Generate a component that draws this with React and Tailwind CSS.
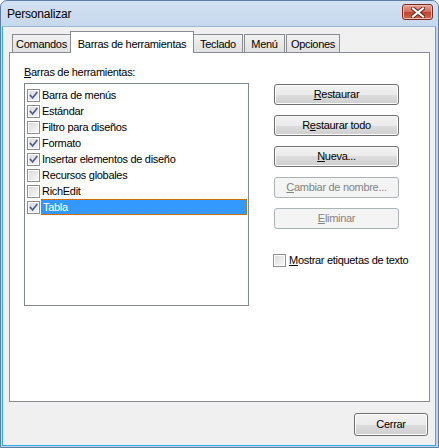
import React from 'react'

const FONT = { fontFamily: '"Liberation Sans", Arial, sans-serif' }

const TOOLBARS = [
  { label: 'Barra de menús', checked: true },
  { label: 'Estándar', checked: true },
  { label: 'Filtro para diseños', checked: false },
  { label: 'Formato', checked: true },
  { label: 'Insertar elementos de diseño', checked: true },
  { label: 'Recursos globales', checked: false },
  { label: 'RichEdit', checked: false },
  { label: 'Tabla', checked: true, selected: true },
]

function CheckBox({ checked }) {
  return (
    <div className="w-[13px] h-[13px] shrink-0 border border-[#8e8f8f] bg-white p-px">
      <div className="w-full h-full bg-[linear-gradient(135deg,#dcdcdc,#f7f7f7)] relative">
        {checked && (
          <svg width="11" height="11" viewBox="0 0 11 11" className="absolute -left-px -top-px">
            <path d="M2.5 5.5 L4.6 8 L8.8 2.6" fill="none" stroke="#4a5f8e" strokeWidth="1.7" strokeLinecap="square" />
          </svg>
        )}
      </div>
    </div>
  )
}

function Btn({ children, disabled, className = '' }) {
  return (
    <div
      className={
        'flex items-center justify-center rounded-[3px] border text-[11px] tracking-[-0.3px] leading-none ' +
        (disabled
          ? 'border-[#adb2b5] bg-[#f4f4f4] text-[#838383] '
          : 'border-[#707070] text-black bg-[linear-gradient(#f2f2f2_0%,#ebebeb_50%,#dddddd_50%,#cfcfcf_100%)] shadow-[inset_0_0_0_1px_#fcfcfc] ') +
        className
      }
    >
      {children}
    </div>
  )
}

function Tab({ children, active, w }) {
  if (active) {
    return (
      <div className={`${w} h-[22px] -mb-px -mx-px relative z-10 bg-white border border-b-0 border-[#898c95] flex items-start justify-center pt-[4px] text-[11px] tracking-[-0.3px]`}>
        {children}
      </div>
    )
  }
  return (
    <div className={`${w} h-[18px] border border-b-0 border-[#898c95] bg-[linear-gradient(#f2f2f2,#e0e0e0)] flex items-center justify-center pt-[2px] text-[11px] tracking-[-0.3px]`}>
      {children}
    </div>
  )
}

export default function App() {
  return (
    <div className="w-[439px] h-[448px] text-black" style={FONT}>
      <div className="w-full h-full rounded-t-[7px] border border-[#5e7ea6] bg-[linear-gradient(#d3e2f3,#bfd3ec_40px)] flex flex-col">
        {/* title bar */}
        <div className="h-[25px] flex items-center justify-between pl-[6px] pr-[5px] shrink-0">
          <span className="text-[12px] tracking-[-0.2px]">Personalizar</span>
          <div className="w-[31px] h-[16px] -mt-[3px] rounded-[3px] border border-[#7b2a20] bg-[linear-gradient(#e7a195,#d36b59_50%,#c0412c_50%,#cf6b4d)] shadow-[inset_0_0_0_1px_#eeb9ae] flex items-center justify-center">
            <svg width="14" height="11" viewBox="0 0 14 11">
              <path d="M2 1.5 L12 9.5 M12 1.5 L2 9.5" stroke="#5a2118" strokeWidth="4" strokeLinecap="square" />
              <path d="M2 1.5 L12 9.5 M12 1.5 L2 9.5" stroke="#ffffff" strokeWidth="2.2" strokeLinecap="square" />
            </svg>
          </div>
        </div>

        {/* client */}
        <div className="flex-1 ml-px mr-[2px] mb-px border border-t-[#9fb6d2] border-x-[#2fb0e6] border-b-[#2fb0e6] bg-[#f0f0f0] flex flex-col pt-[4px] pl-[6px] pr-[5px]">
          <div className="flex items-end h-[21px] pl-[3px] relative z-10">
            <Tab w="w-[59px]">Comandos</Tab>
            <Tab w="w-[124px]" active>Barras de herramientas</Tab>
            <Tab w="w-[50px]">Teclado</Tab>
            <div className="w-px" />
            <Tab w="w-[41px]">Menú</Tab>
            <div className="w-px" />
            <Tab w="w-[54px]">Opciones</Tab>
          </div>

          <div className="h-[350px] border border-[#898c95] bg-white pt-[13px] pl-[14px] flex">
            <div className="flex flex-col">
              <div className="text-[11px] tracking-[-0.3px] leading-[13px] h-[13px]">
                <span className="underline">B</span>arras de herramientas:
              </div>
              <div className="mt-[4px] w-[225px] h-[223px] border border-[#828790] bg-white pt-[3px] pl-[2px] pr-px">
                {TOOLBARS.map((t) => (
                  <div key={t.label} className="h-[16px] flex items-center">
                    <CheckBox checked={t.checked} />
                    <div
                      className={
                        'ml-px flex-1 h-[16px] flex items-center pl-px text-[11px] tracking-[-0.3px] ' +
                        (t.selected ? 'bg-[#3399ff] text-white border border-dotted border-[#cc6600] pl-0' : '')
                      }
                    >
                      {t.label}
                    </div>
                  </div>
                ))}
              </div>
            </div>

            <div className="ml-[25px] pt-[18px] flex flex-col">
              <div className="flex flex-col gap-[10px]">
                <Btn className="w-[125px] h-[21px]"><span><span className="underline">R</span>estaurar</span></Btn>
                <Btn className="w-[125px] h-[21px]"><span>R<span className="underline">e</span>staurar todo</span></Btn>
                <Btn className="w-[125px] h-[21px]"><span><span className="underline">N</span>ueva...</span></Btn>
                <Btn disabled className="w-[125px] h-[21px]"><span><span className="underline">C</span>ambiar de nombre...</span></Btn>
                <Btn disabled className="w-[125px] h-[21px]"><span><span className="underline">E</span>liminar</span></Btn>
              </div>
              <div className="mt-[23px] -ml-px flex items-center gap-[3px]">
                <CheckBox checked={false} />
                <span className="text-[11px] tracking-[-0.3px]"><span className="underline">M</span>ostrar etiquetas de texto</span>
              </div>
            </div>
          </div>

          <div className="flex justify-end pt-[11px] pr-[2px]">
            <Btn className="w-[74px] h-[23px]">Cerrar</Btn>
          </div>
        </div>
      </div>
    </div>
  )
}
